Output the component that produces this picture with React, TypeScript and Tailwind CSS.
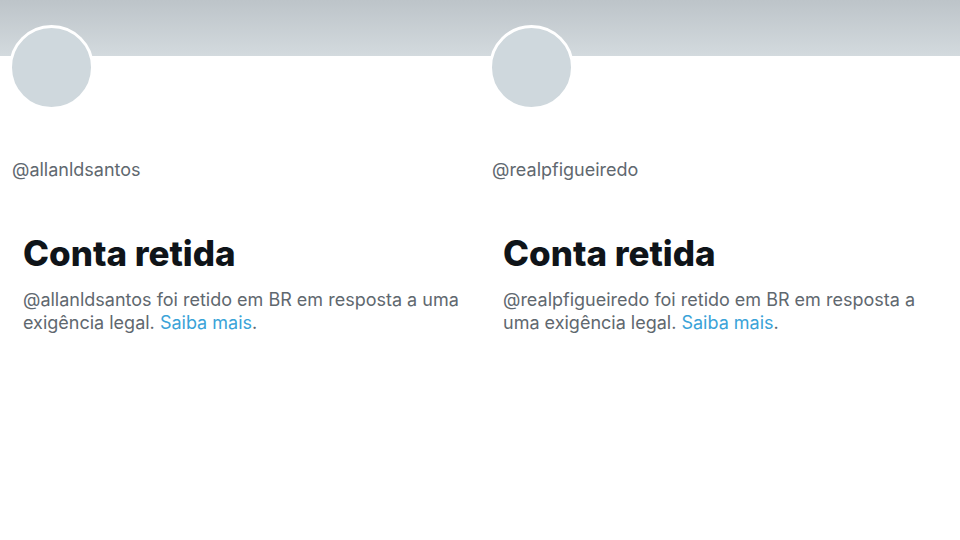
const accounts = ["allanldsantos", "realpfigueiredo"];

function WithheldProfile({ handle, lines }: { handle: string; lines: [string, string] }) {
  return (
    <div className="flex flex-col">
      <div className="h-[56px] bg-gradient-to-b from-[#bdc4c9] to-[#d3dade]" />
      <div className="-mt-[31px] ml-[9px] h-[85px] w-[85px] rounded-full border-[3px] border-white bg-[#cfd8dd]" />
      <p className="mt-[49px] ml-[12px] text-[18px] leading-[22px] text-[#5f686f]">@{handle}</p>
      <h1 className="mt-[52px] ml-[23px] text-[35px] font-extrabold leading-[40px] text-[#0f1419]">
        Conta retida
      </h1>
      <p className="mt-[15px] ml-[23px] text-[18px] leading-[23px] text-[#5f686f]">
        {lines[0]}
        <br />
        {lines[1]} <span className="text-[#3aa3d8]">Saiba mais</span>.
      </p>
    </div>
  );
}

export default function App() {
  return (
    <main
      className="grid h-[540px] w-[960px] grid-cols-2 overflow-hidden bg-white"
      style={{ fontFamily: "Inter, 'Noto Sans', sans-serif" }}
    >
      <WithheldProfile
        handle={accounts[0]}
        lines={["@allanldsantos foi retido em BR em resposta a uma", "exigência legal."]}
      />
      <WithheldProfile
        handle={accounts[1]}
        lines={["@realpfigueiredo foi retido em BR em resposta a", "uma exigência legal."]}
      />
    </main>
  );
}
